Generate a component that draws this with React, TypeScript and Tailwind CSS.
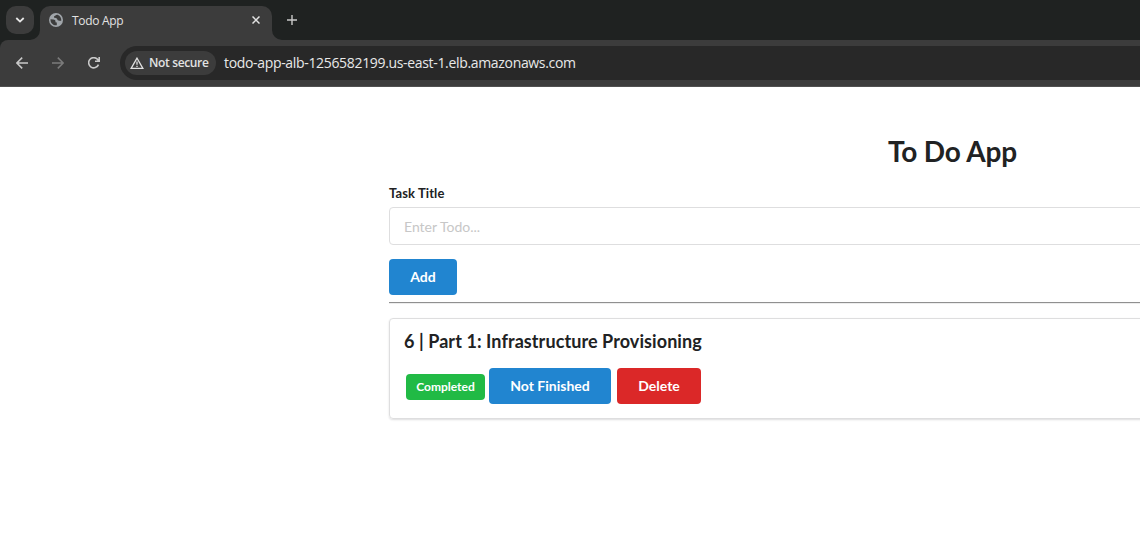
import React from 'react';

function Globe() {
  return (
    <svg width="14" height="14" viewBox="0 0 14 14" className="shrink-0">
      <circle cx="7" cy="7" r="7" fill="#a0a5aa" />
      <path d="M1.500 6.200 4.500 6.600c1 .2 1.900.8 2 1.700l-.1 1 1.400.2v2.800C4 12.700 1.300 9.800 1.500 6.200ZM8.600 1.700c-1.900-.3-1.800.9-3 1.200-.8.3-.6 1.300-.3 1.800.9.300 2.100.200 2.700 1.100.5.800.4 1.600 1.400 1.800.9.200 1.800-.2 2.800.4.500-2.800-1-5.400-3.600-6.300Z" fill="#3c3c3c" />
    </svg>
  );
}

function TabStrip() {
  return (
    <div className="flex h-10 bg-[#1f2221] pt-1.5 pl-1.5">
      <button className="flex size-7 items-center justify-center rounded-[10px] bg-[#3c3c3c]" aria-label="Search tabs">
        <svg width="10" height="6" viewBox="0 0 10 6" fill="none" stroke="#e8e8e8" strokeWidth="1.8"><path d="m1.300 1 3.700 3.600L8.700 1" /></svg>
      </button>
      <div className="relative ml-1.5 flex h-[34px] w-[232px] items-center rounded-t-[10px] bg-[#3c3c3c] pr-3 pb-1.5 pl-[9px]">
        <svg className="absolute bottom-0 -left-2.5" width="10" height="10"><path d="M10 0v10H0A10 10 0 0 0 10 0Z" fill="#3c3c3c" /></svg>
        <svg className="absolute -right-2.5 bottom-0" width="10" height="10"><path d="M0 0v10h10A10 10 0 0 1 0 0Z" fill="#3c3c3c" /></svg>
        <Globe />
        <span className="ml-[9px] flex-1 pt-px text-[12px] leading-4 tracking-[-0.3px] text-[#e3e3e3]">Todo App</span>
        <svg width="8" height="8" viewBox="0 0 8 8" fill="none" stroke="#e3e3e3" strokeWidth="1.500"><path d="m.5.5 7 7m0-7-7 7" /></svg>
      </div>
      <svg className="mt-[9px] ml-[15px]" width="10" height="10" viewBox="0 0 10 10" fill="none" stroke="#c9c9c9" strokeWidth="1.400"><path d="M5 0v10M0 5h10" /></svg>
    </div>
  );
}

function Toolbar() {
  return (
    <div className="bg-[#1f2221]">
      <div className="flex h-[47px] items-start rounded-tl-lg border-b border-[#505050] bg-[#3c3c3c] pt-1.5">
        <div className="flex h-[34px] w-[120px] items-center pl-4">
          <svg width="12" height="12" viewBox="0 0 12 12" fill="none" stroke="#c9c9c9" strokeWidth="1.500"><path d="M12 6H1M6.200.6.900 6l5.300 5.400" /></svg>
          <svg className="ml-6" width="12" height="12" viewBox="0 0 12 12" fill="none" stroke="#7b7b7b" strokeWidth="1.500"><path d="M0 6h11M5.800.6 11.100 6l-5.300 5.400" /></svg>
          <svg className="ml-6" width="12" height="12" viewBox="0 0 12 12" fill="none" stroke="#c9c9c9" strokeWidth="1.600"><path d="M10.500 7.600A5.100 5.100 0 1 1 9.900 2.800L11 4.200M11.200 0v4.300H7" /></svg>
        </div>
        <div className="flex h-[34px] flex-1 items-center rounded-l-full bg-[#282828] pl-[5px]">
          <div className="flex h-6 w-[91px] items-center rounded-full bg-[#3c3c3c] pl-[5px]">
            <svg width="14" height="12" viewBox="0 0 14 12" fill="none" stroke="#e0e0e0" strokeWidth="1.300"><path d="M7 1.200 1.100 11.300h11.800ZM7 4.500v3.200M7 8.700V10" /></svg>
            <span className="ml-[5px] whitespace-nowrap text-[12px] leading-4 font-semibold tracking-[-0.35px] text-[#e3e3e3]">Not secure</span>
          </div>
          <span className="ml-2 whitespace-nowrap text-[14px] leading-5 tracking-[-0.33px] text-[#e8e8e8]">todo-app-alb-1256582199.us-east-1.elb.amazonaws.com</span>
        </div>
      </div>
    </div>
  );
}

function Button({ className, children }: { className: string; children: React.ReactNode }) {
  return (
    <button className={`h-9 rounded text-center text-[14px] leading-[14px] font-bold whitespace-nowrap text-white ${className}`}>
      {children}
    </button>
  );
}

export default function App() {
  return (
    <div className="h-[542px] w-full overflow-hidden bg-white">
      <header className="font-['Open_Sans','Noto_Sans',sans-serif]">
        <TabStrip />
        <Toolbar />
      </header>
      <main className="ml-[389px] w-[1127px] pt-[46px] font-['Lato',sans-serif] text-[#212223]">
        <h1 className="text-center text-[28px] leading-9 font-bold tracking-[-0.2px]">To Do App</h1>
        <form className="mt-[15px]" onSubmit={(e) => e.preventDefault()}>
          <label className="block text-[13px] leading-[18px] font-bold tracking-[0.1px]" htmlFor="title">Task Title</label>
          <input id="title" placeholder="Enter Todo..." className="mt-[5px] block h-[38px] w-full rounded border border-[#dededf] px-3.5 text-[14px] placeholder:text-[#c7c7c7]" />
          <div className="mt-3.5 flex"><Button className="w-[68px] bg-[#2185d0]">Add</Button></div>
        </form>
        <div className="mt-[7px] h-0.5 border-t border-b border-t-[#909090] border-b-[#ededed]" />
        <section className="mt-3.5 h-[101px] rounded border border-[#dededf] px-3.5 pt-[11px] shadow-[0_1px_2px_0_rgba(34,36,38,0.15)]">
          <h2 className="text-[18px] leading-[23px] font-bold tracking-[0.08px]">6 | Part 1: Infrastructure Provisioning</h2>
          <div className="mt-[15px] flex items-center">
            <span className="mt-0.5 mr-1 ml-0.5 flex h-[26px] w-[79px] items-center justify-center rounded bg-[#21ba45] text-[12px] leading-3 font-bold text-white">Completed</span>
            <Button className="mr-1.5 w-[122px] bg-[#2185d0]">Not Finished</Button>
            <Button className="w-[84px] bg-[#db2828]">Delete</Button>
          </div>
        </section>
      </main>
    </div>
  );
}
